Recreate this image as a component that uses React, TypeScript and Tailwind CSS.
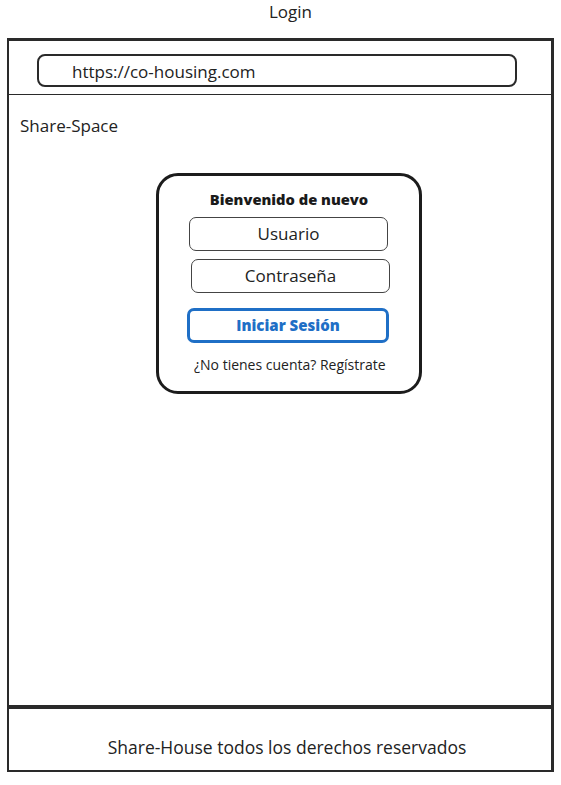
const font = { fontFamily: '"Open Sans", "Noto Sans", sans-serif' }

const Field = ({ label, className }: { label: string; className: string }) => (
  <div
    className={`flex h-[34px] items-center justify-center rounded-[7px] border-[1.5px] border-[#444] text-[17px] text-[#222] ${className}`}
  >
    {label}
  </div>
)

const LoginCard = () => (
  <div className="ml-[147px] mt-[35px] flex h-[221px] w-[266px] flex-col rounded-[22px] border-[3px] border-[#1c1c1c] pt-[13px]">
    <div className="text-center text-[14.7px] leading-[20px] font-extrabold text-[#1a1a1a]">Bienvenido de nuevo</div>
    <Field label="Usuario" className="ml-[30px] mt-[8px] w-[199px]" />
    <Field label="Contraseña" className="ml-[32px] mt-[8px] w-[199px]" />
    <div className="ml-[28px] mt-[15px] flex h-[35px] w-[202px] items-center justify-center rounded-[7px] border-[3px] border-[#1f6fc6] text-[15px] font-extrabold text-[#1f6fc6]">
      Iniciar Sesión
    </div>
    <div className="ml-[35px] mt-[12px] text-[14px] leading-[20px] text-[#222]">¿No tienes cuenta? Regístrate</div>
  </div>
)

export default function App() {
  return (
    <div className="h-[785px] w-[561px] bg-white text-[#222]" style={font}>
      <div className="flex h-[38px] justify-center pl-[20px] text-[17px] leading-[24px]">Login</div>
      <div className="ml-[7px] flex h-[734px] w-[547px] flex-col border-2 border-t-[3px] border-r-[3px] border-[#2a2a2a]">
        <div className="flex h-[54px] shrink-0 items-start border-b-[1.5px] border-[#2a2a2a] pl-[28px] pt-[13px]">
          <div className="flex h-[33px] w-[480px] items-center rounded-[8px] border-2 border-[#2a2a2a] pl-[33px] pt-[2px] text-[17px]">
            https://co-housing.com
          </div>
        </div>
        <div className="flex flex-1 flex-col border-b-4 border-[#2a2a2a]">
          <div className="ml-[11px] mt-[19px] text-[17px] leading-[24px]">Share-Space</div>
          <LoginCard />
        </div>
        <div className="flex h-[61px] shrink-0 items-end justify-center pb-[10px] pl-[14px] text-[17.5px]">
          Share-House todos los derechos reservados
        </div>
      </div>
    </div>
  )
}
